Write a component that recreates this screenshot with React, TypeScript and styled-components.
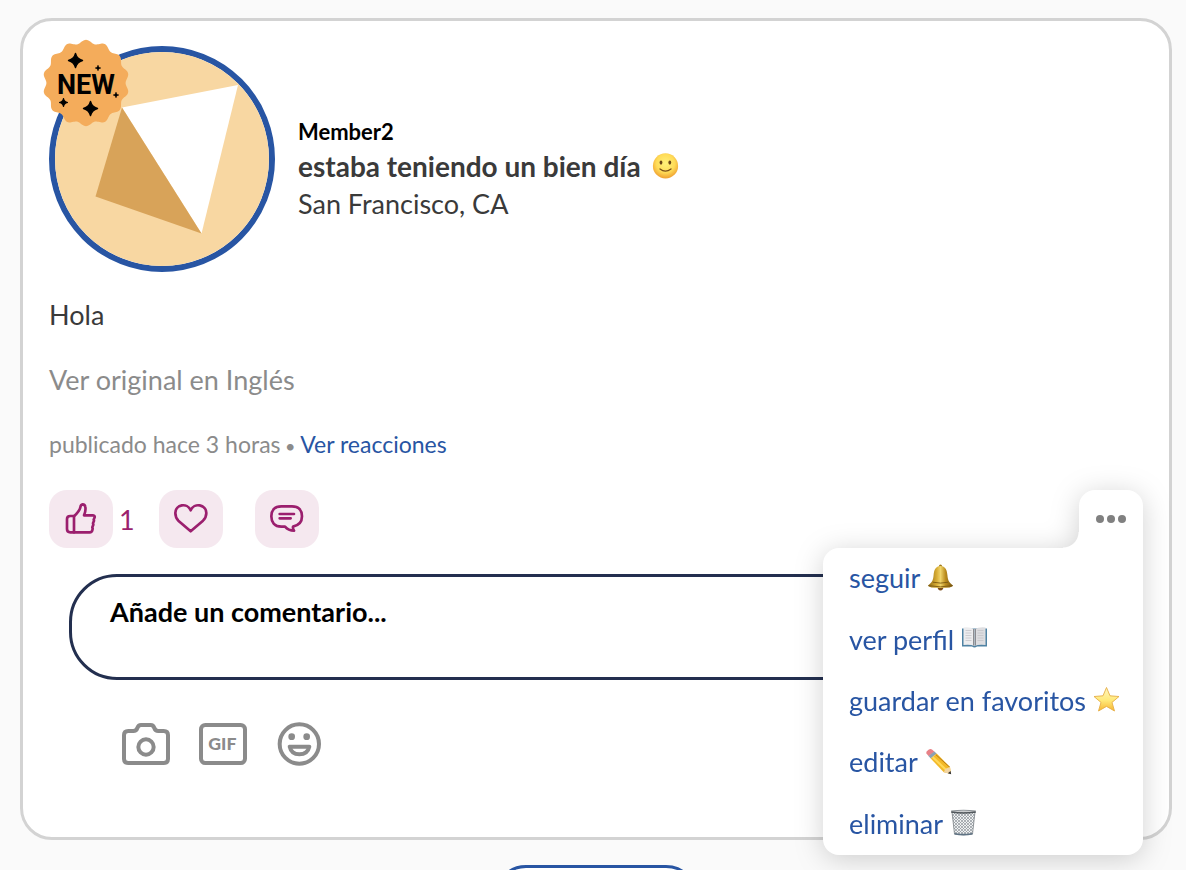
import React from 'react';
import styled, { createGlobalStyle } from 'styled-components';

const blue = '#2855a3';
const plum = '#9b1f6e';
const grey = '#8b8b8b';

const GlobalStyle = createGlobalStyle`
  *, *::before, *::after { box-sizing: border-box; }
  body {
    margin: 0;
    background: #fafafa;
    color: #3a3a3a;
    font-family: Lato, "Noto Sans", sans-serif;
    font-size: 27px;
    line-height: 39px;
  }
  button, textarea { font: inherit; color: inherit; }
  a { color: ${blue}; text-decoration: none; }
  p, h2, ul { margin: 0; padding: 0; }
`;

const Page = styled.main`
  display: flex;
  flex-direction: column;
  gap: 25px;
  padding: 18px 14px 24px 20px;
`;

const Card = styled.article`
  display: flex;
  flex-direction: column;
  gap: 26px;
  padding: 25px 26px 71px;
  background: #fff;
  border: 3px solid #d3d3d3;
  border-radius: 32px;
`;

const Header = styled.header`
  display: flex;
  align-items: center;
  gap: 23px;
  margin-bottom: -3px;
`;

const AvatarFrame = styled.div`
  position: relative;
  flex: none;
  width: 226px;
  height: 226px;
`;

const AvatarImage = styled.svg`
  display: block;
  width: 100%;
  height: 100%;
  border: 6px solid ${blue};
  border-radius: 50%;
`;

const Badge = styled.svg`
  position: absolute;
  top: -6px;
  left: -6px;
  width: 86px;
  height: 86px;
  overflow: visible;
`;

const Identity = styled.div`
  display: flex;
  flex-direction: column;
  padding-top: 20px;
  line-height: 37px;
`;

const Name = styled.h2`
  color: #000;
  font-size: 22px;
  font-weight: 700;
  line-height: 32px;
`;

const Mood = styled.p`
  display: flex;
  align-items: center;
  gap: 11px;
  font-size: 28px;
  font-weight: 700;
`;

const Paragraph = styled.p``;

const QuietButton = styled.button`
  align-self: flex-start;
  padding: 0;
  border: 0;
  background: none;
  color: ${grey};
  cursor: pointer;
`;

const Meta = styled.p`
  color: ${grey};
  font-size: 23px;
`;

const Separator = styled.span`
  font-size: 18px;
  line-height: 1;
`;

const Actions = styled.div`
  display: flex;
  gap: 32px;
`;

const Reaction = styled.div`
  display: flex;
  align-items: center;
  gap: 6px;
  color: ${plum};
`;

const Count = styled.span`
  width: 8px;
`;

const ReactionButton = styled.button`
  width: 64px;
  height: 58px;
  padding: 0;
  border: 0;
  border-radius: 18px;
  background: #f5e8ef;
  color: ${plum};
  cursor: pointer;

  svg { display: block; width: 64px; height: 58px; }
`;

const Menu = styled.div`
  position: relative;
  z-index: 1;
  margin-left: auto;
  filter: drop-shadow(0 4px 14px rgba(0, 0, 0, 0.18));
`;

const MenuToggle = styled.button`
  position: relative;
  display: flex;
  align-items: center;
  justify-content: center;
  gap: 3px;
  width: 64px;
  height: 58px;
  padding: 0;
  border: 0;
  border-radius: 16px 16px 0 0;
  background: #fff;
  cursor: pointer;

  &::before {
    content: '';
    position: absolute;
    right: 100%;
    bottom: 0;
    width: 16px;
    height: 16px;
    background: radial-gradient(circle at 0 0, transparent 15px, #fff 16px);
  }
`;

const Dot = styled.span`
  width: 8px;
  height: 8px;
  border-radius: 50%;
  background: #808080;
`;

const MenuList = styled.ul`
  position: absolute;
  top: 100%;
  right: 0;
  display: grid;
  grid-auto-rows: 1fr;
  width: 320px;
  min-height: 307px;
  border-radius: 16px 0 16px 16px;
  background: #fff;
  list-style: none;
`;

const MenuItem = styled.li`
  display: flex;
`;

const MenuLink = styled.a`
  display: flex;
  flex: 1;
  align-items: center;
  gap: 7px;
  padding: 0 20px 2px 26px;
  white-space: nowrap;
`;

const Emoji = styled.svg`
  flex: none;
  width: 27px;
  height: 27px;
  margin-bottom: 1px;
`;

const Comment = styled.textarea`
  display: block;
  height: 106px;
  margin: 0 20px;
  padding: 15px 38px;
  border: 3px solid #232f4f;
  border-radius: 48px;
  outline: 0;
  background: #fff;
  font-weight: 700;
  resize: none;

  &::placeholder { color: #000; opacity: 1; }
`;

const Tools = styled.div`
  display: flex;
  gap: 29px;
  padding: 16px 73px 0;
`;

const ToolButton = styled.button`
  padding: 0;
  border: 0;
  background: none;
  color: ${grey};
  cursor: pointer;

  svg { display: block; width: 48px; height: 44px; }
`;

const MoreButton = styled.button`
  align-self: center;
  width: 204px;
  height: 64px;
  border: 3px solid ${blue};
  border-radius: 32px;
  background: #fff;
  color: ${blue};
  cursor: pointer;
`;

const scallop = (() => {
  const points: string[] = [];
  for (let i = 0; i < 280; i += 1) {
    const a = (i / 280) * Math.PI * 2;
    const r = 41.4 + 1.8 * Math.cos(14 * a);
    points.push(`${(43 + r * Math.sin(a)).toFixed(2)},${(43 - r * Math.cos(a)).toFixed(2)}`);
  }
  return points.join(' ');
})();

const Spark = ({ x, y, r }: { x: number; y: number; r: number }) => (
  <path
    transform={`translate(${x} ${y}) scale(${r})`}
    d="M0-1C.15-.4.4-.15 1 0C.4.15.15.4 0 1C-.15.4-.4.15-1 0C-.4-.15-.15-.4 0-1Z"
    stroke="#000"
    strokeWidth=".2"
    strokeLinejoin="round"
  />
);

const NewBadge = () => (
  <Badge viewBox="0 0 86 86" role="img" aria-label="NEW">
    <polygon points={scallop} fill="#f4ac5b" />
    <Spark x={32.5} y={20.5} r={7} />
    <Spark x={55} y={28} r={2.8} />
    <Spark x={73} y={55} r={2.8} />
    <Spark x={20.5} y={62.5} r={4.4} />
    <Spark x={47.5} y={68.5} r={7} />
    <text
      x="43"
      y="54"
      textAnchor="middle"
      fontFamily='"Liberation Sans Narrow", Roboto, sans-serif'
      fontWeight="700"
      fontSize="27"
    >
      NEW
    </text>
  </Badge>
);

const Smile = () => (
  <Emoji viewBox="0 0 27 27" aria-hidden="true">
    <defs>
      <radialGradient id="face" cx=".5" cy=".4" r=".6">
        <stop offset="0" stopColor="#fff07a" />
        <stop offset=".6" stopColor="#ffdc58" />
        <stop offset="1" stopColor="#efa030" />
      </radialGradient>
    </defs>
    <circle cx="13.5" cy="12.9" r="12.6" fill="url(#face)" />
    <ellipse cx="9" cy="9.6" rx="1.4" ry="2.1" fill="#6b4516" />
    <ellipse cx="17.8" cy="9.6" rx="1.4" ry="2.1" fill="#6b4516" />
    <path d="M8 16Q13.4 20.4 19 16" fill="none" stroke="#7a4f18" strokeWidth="1.3" strokeLinecap="round" />
  </Emoji>
);

const Bell = () => (
  <Emoji viewBox="0 0 27 27" aria-hidden="true">
    <defs>
      <linearGradient id="brass">
        <stop offset="0" stopColor="#8f6a12" />
        <stop offset=".35" stopColor="#d9ae35" />
        <stop offset=".5" stopColor="#f0d46a" />
        <stop offset=".7" stopColor="#bb8c1d" />
        <stop offset="1" stopColor="#76520c" />
      </linearGradient>
    </defs>
    <circle cx="13.5" cy="23.6" r="2.8" fill="#7c4d1c" />
    <circle cx="13.5" cy="2.2" r="1.6" fill="#a37b1c" />
    <path d="M13.5 2C18.500 2.300 20 6 20.400 11C20.800 17 22.500 18.500 26 21.500Q25.500 24 13.500 24Q1.500 24 1 21.500C4.500 18.500 6.200 17 6.600 11C7 6 8.500 2.300 13.500 2Z" fill="url(#brass)" />
    <path d="M1.500 21.700Q13.500 24 25.500 21.700M5.800 18.200Q13.500 20 21.200 18.200" fill="none" stroke="#7a5810" strokeWidth=".9" />
  </Emoji>
);

const Book = () => (
  <Emoji viewBox="0 0 27 27" aria-hidden="true">
    <path d="M1 3.500H26V21.500H16Q13.500 23.500 11 21.500H1Z" fill="#4f82a3" />
    <path d="M2.500 2.500Q9 1.800 13.500 4.200V21Q9 19 2.500 20Z" fill="#ececee" />
    <path d="M24.500 2.500Q18 1.800 13.500 4.200V21Q18 19 24.500 20Z" fill="#dddde0" />
    <path d="M12.600 4V20.500M14.400 4V20.500" stroke="#77777c" strokeWidth=".9" />
    <path d="M4.500 5.500H10.500M4.500 8H10.500M4.500 10.500H10.500M4.500 13H10.500M4.500 15.500H10.500M16.500 5.500H22.500M16.500 8H22.500M16.500 10.500H22.500M16.500 13H22.500M16.500 15.500H22.500" stroke="#c4c4c8" strokeWidth=".8" />
  </Emoji>
);

const Star = () => (
  <Emoji viewBox="0 0 27 27" aria-hidden="true">
    <defs>
      <linearGradient id="gold" x1="0" y1="0" x2="0" y2="1">
        <stop offset="0" stopColor="#fff6c0" />
        <stop offset=".55" stopColor="#ffe978" />
        <stop offset="1" stopColor="#f7b633" />
      </linearGradient>
    </defs>
    <path d="M13.500 1.500L17 9.800L26 10.500L19 16.400L21.500 25L13.500 20.400L5.500 25L8 16.400L1 10.500L10 9.800Z" fill="url(#gold)" stroke="#e5ae45" strokeWidth=".9" strokeLinejoin="round" />
  </Emoji>
);

const Pencil = () => (
  <Emoji viewBox="0 0 27 27" aria-hidden="true">
    <path d="M1.200 5.200Q.8 3.500 3.500 1.800Q5.500.5 7 1.600L9.500 3.700L3.800 8.300Z" fill="#e88187" />
    <path d="M3.500 8L9.300 3.500L11.700 5.600L5.700 10.600Z" fill="#8ba1b4" />
    <path d="M5.700 10.600L11.700 5.600L25 19L26 26L18.800 24.300Z" fill="#f3b928" />
    <path d="M7.600 9L22 22.700" stroke="#ffd95a" strokeWidth="2.200" />
    <path d="M10.700 6.500L25 19.500" stroke="#b97c16" strokeWidth="1" />
    <path d="M18.800 24.300L20.500 20.700L25 19L26 26Z" fill="#f2d5a4" />
    <path d="M22.800 25.200L25.600 23L26.200 26.200Z" fill="#333" />
  </Emoji>
);

const Trash = () => (
  <Emoji viewBox="0 0 27 27" aria-hidden="true">
    <defs>
      <pattern id="mesh" width="3" height="3" patternUnits="userSpaceOnUse">
        <rect width="3" height="3" fill="#eef0f1" />
        <path d="M0 0L3 3M3 0L0 3" stroke="#8e959b" strokeWidth=".7" />
      </pattern>
    </defs>
    <path d="M2 3H25L22.500 25Q13.500 26.500 4.500 25Z" fill="url(#mesh)" stroke="#7b8287" strokeWidth=".8" />
    <path d="M1.200 2.200Q13.500.3 25.800 2.200" fill="none" stroke="#8b9196" strokeWidth="1.200" />
    <path d="M1.200 3Q13.500 5 25.800 3" fill="none" stroke="#51575c" strokeWidth="1.400" />
    <path d="M4.500 24.800Q13.500 26.500 22.500 24.800" fill="none" stroke="#5f7384" strokeWidth="1.600" />
  </Emoji>
);

const stroke = {
  fill: 'none',
  stroke: 'currentColor',
  strokeLinecap: 'round',
  strokeLinejoin: 'round',
} as const;

const menuItems = [
  { label: 'seguir', Icon: Bell },
  { label: 'ver perfil', Icon: Book },
  { label: 'guardar en favoritos', Icon: Star },
  { label: 'editar', Icon: Pencil },
  { label: 'eliminar', Icon: Trash },
];

export default function App() {
  return (
    <>
      <GlobalStyle />
      <Page>
        <Card>
          <Header>
            <AvatarFrame>
              <AvatarImage viewBox="55 52 214 214" role="img" aria-label="Member2">
                <rect x="49" y="46" width="226" height="226" fill="#f8d7a2" />
                <polygon points="122,107.500 238,85 201.500,233.500" fill="#fff" />
                <polygon points="122,107.500 95.500,196.500 201.500,233.500" fill="#d8a359" />
              </AvatarImage>
              <NewBadge />
            </AvatarFrame>
            <Identity>
              <Name>Member2</Name>
              <Mood>
                estaba teniendo un bien día <Smile />
              </Mood>
              <Paragraph>San Francisco, CA</Paragraph>
            </Identity>
          </Header>

          <Paragraph>Hola</Paragraph>
          <QuietButton type="button">Ver original en Inglés</QuietButton>
          <Meta>
            publicado hace 3 horas<Separator> • </Separator>
            <a href="#reacciones">Ver reacciones</a>
          </Meta>

          <Actions>
            <Reaction>
              <ReactionButton type="button" aria-label="Me gusta">
                <svg viewBox="27 30 192 174" {...stroke} strokeWidth="8">
                  <path d="M102 108H91Q81 108 81 117V147Q81 157 91 157H102Z" />
                  <path d="M102 157H149Q156 157 157 151L158 146L157 142L160 134L159 130L162 122L161 119L164 112Q165 106 158 106H132Q138 92 136 81Q135 73 128 73Q122 74 121 82Q119 93 102 109" />
                </svg>
              </ReactionButton>
              <Count>1</Count>
            </Reaction>
            <Reaction>
              <ReactionButton type="button" aria-label="Me encanta">
                <svg viewBox="357 30 192 174" {...stroke} strokeWidth="8">
                  <path d="M452 154L415 122Q406 112 406 99C406 73 442 67 452 91C462 67 499 73 499 99Q499 112 489 122Z" />
                </svg>
              </ReactionButton>
            </Reaction>
            <Reaction>
              <ReactionButton type="button" aria-label="Comentar">
                <svg viewBox="645 30 192 174" {...stroke} strokeWidth="8">
                  <path d="M724 79H756C777 79 786 92 786 109C786 125 778 136 759 140Q758 147 762 152Q745 152 735 140H724C703 140 694 126 694 109C694 92 703 79 724 79Z" />
                  <path d="M719 102H762M719 115H752" />
                </svg>
              </ReactionButton>
            </Reaction>
            <Menu>
              <MenuToggle type="button" aria-label="Opciones" aria-expanded="true">
                <Dot />
                <Dot />
                <Dot />
              </MenuToggle>
              <MenuList>
                {menuItems.map(({ label, Icon }) => (
                  <MenuItem key={label}>
                    <MenuLink href="#menu">
                      {label} <Icon />
                    </MenuLink>
                  </MenuItem>
                ))}
              </MenuList>
            </Menu>
          </Actions>

          <Comment aria-label="Comentario" placeholder="Añade un comentario..." />

          <Tools>
            <ToolButton type="button" aria-label="Foto">
              <svg viewBox="186 471 144 132" {...stroke} strokeWidth="12">
                <path d="M205 498Q192 498 192 510V582Q192 594 205 594H311Q324 594 324 582V510Q324 498 311 498H295Q286 498 283 489Q280 480 272 480H243Q235 480 232 489Q229 498 220 498Z" />
                <circle cx="258" cy="546" r="23" />
              </svg>
            </ToolButton>
            <ToolButton type="button" aria-label="GIF">
              <svg viewBox="417 471 144 132" {...stroke} strokeWidth="12">
                <rect x="423" y="480" width="132" height="114" rx="13" />
                <text
                  x="487"
                  y="556"
                  textAnchor="middle"
                  fill="currentColor"
                  stroke="none"
                  fontFamily="Lato, sans-serif"
                  fontWeight="900"
                  fontSize="53"
                >
                  GIF
                </text>
              </svg>
            </ToolButton>
            <ToolButton type="button" aria-label="Emoji">
              <svg viewBox="648 471 144 132" {...stroke} strokeWidth="12">
                <circle cx="718" cy="537" r="59" />
                <circle cx="695" cy="515" r="10" fill="currentColor" stroke="none" />
                <circle cx="740" cy="515" r="10" fill="currentColor" stroke="none" />
                <path d="M689 545H748Q743 568 718 568Q694 568 689 545Z" />
              </svg>
            </ToolButton>
          </Tools>
        </Card>
        <MoreButton type="button" aria-label="Ver más" />
      </Page>
    </>
  );
}
